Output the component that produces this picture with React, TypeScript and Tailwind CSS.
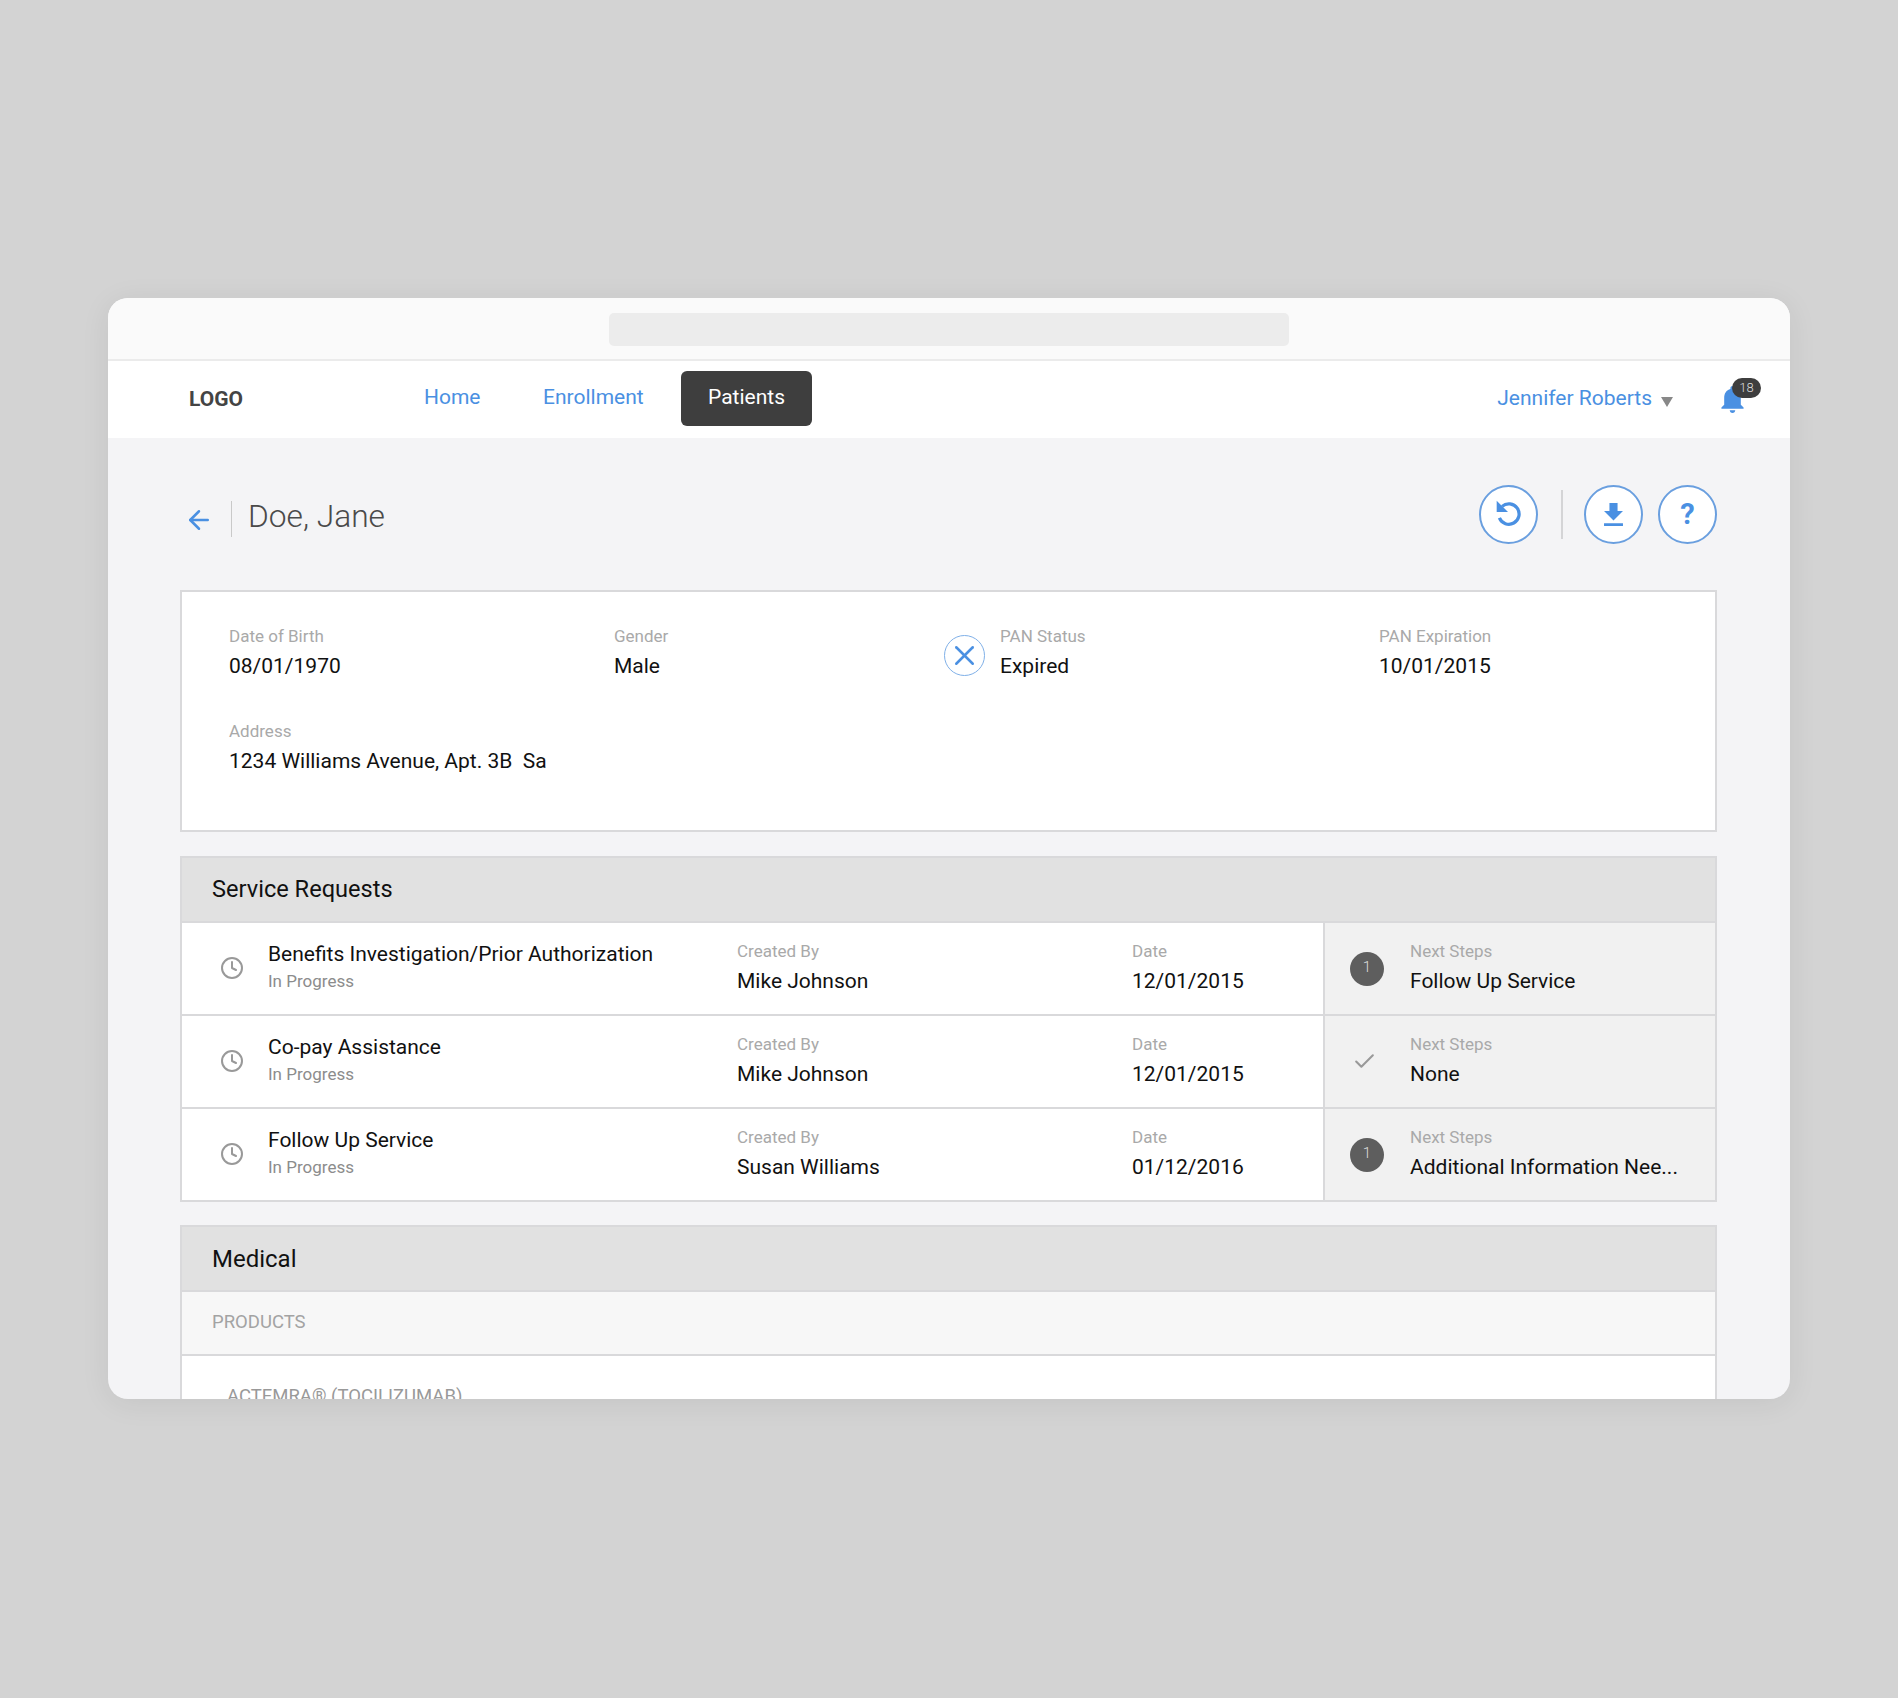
import { ArrowLeft, Check, Clock, X } from 'lucide-react';

const BLUE = 'text-[#4a90e2]';

const requests = [
  { title: 'Benefits Investigation/Prior Authorization', by: 'Mike Johnson', date: '12/01/2015', next: 'Follow Up Service', done: false },
  { title: 'Co-pay Assistance', by: 'Mike Johnson', date: '12/01/2015', next: 'None', done: true },
  { title: 'Follow Up Service', by: 'Susan Williams', date: '01/12/2016', next: 'Additional Information Nee...', done: false },
];

const Field = ({ label, value }: { label: string; value: string }) => (
  <div>
    <div className="text-[17px] leading-[20px] text-[#a9a9a9]">{label}</div>
    <div className="mt-[8px] text-[21px] leading-[24px] whitespace-pre text-[#111]">{value}</div>
  </div>
);

const RoundButton = ({ children }: { children: React.ReactNode }) => (
  <div className={`flex h-[59px] w-[59px] items-center justify-center rounded-full border-2 border-[#6a9fdf] bg-white ${BLUE}`}>
    {children}
  </div>
);

export default function App() {
  return (
    <div className="h-[1698px] overflow-hidden bg-[#d3d3d3] pt-[298px] pl-[108px] font-['Roboto',sans-serif]">
      <div className="h-[1101px] w-[1682px] overflow-hidden rounded-[20px] bg-[#f4f4f6] shadow-[0_4px_30px_rgba(0,0,0,0.07)]">
        {/* browser chrome */}
        <div className="flex h-[63px] items-start justify-center border-b-2 border-[#ebebeb] bg-[#fafafa] pt-[15px]">
          <div className="h-[33px] w-[680px] rounded-[5px] bg-[#ececec]" />
        </div>

        {/* nav */}
        <div className="flex h-[77px] items-center bg-white pl-[81px]">
          <div className="w-[235px] text-[21px] font-bold text-[#444]">LOGO</div>
          <div className={`-mt-[3px] w-[119px] text-[21px] ${BLUE}`}>Home</div>
          <div className={`-mt-[3px] w-[138px] text-[21px] ${BLUE}`}>Enrollment</div>
          <div className="-mt-[2px] flex h-[55px] w-[131px] items-center justify-center rounded-[6px] bg-[#3e3e3e] pb-[1px] text-[21px] text-white">Patients</div>
          <div className={`-mt-[1px] ml-auto text-[21px] ${BLUE}`}>Jennifer Roberts</div>
          <div className="mt-[4px] ml-[9px] h-0 w-0 border-x-[6.5px] border-t-[10px] border-x-transparent border-t-[#888]" />
          <div className="relative mr-[45px] ml-[48px] h-[28px] w-[24px]">
            <svg viewBox="4 2.5 16 19.5" className="h-[27px] w-[23px] fill-[#4a90e2]">
              <path d="M12 22c1.1 0 2-.9 2-2h-4c0 1.1.89 2 2 2zm6-6v-5c0-3.07-1.64-5.64-4.5-6.32V4c0-.83-.67-1.5-1.5-1.5s-1.5.67-1.5 1.5v.68C7.63 5.36 6 7.92 6 11v5l-2 2v1h16v-1l-2-2z" />
            </svg>
            <div className="absolute -top-[8px] left-[11px] flex h-[20px] w-[29px] items-center justify-center rounded-full bg-[#3e3e3e] text-[13px] font-light text-[#ddd]">18</div>
          </div>
        </div>

        <div className="pr-[73px] pl-[72px]">
          {/* title row */}
          <div className="flex h-[152px] items-center">
            <ArrowLeft className={`mt-[12px] ml-[4px] h-[30px] w-[30px] ${BLUE}`} strokeWidth={2} />
            <div className="mt-[9px] ml-[17px] h-[36px] w-px bg-[#c9c9c9]" />
            <div className="mt-[6px] ml-[16px] text-[31.7px] font-light text-[#4a4a4a]">Doe, Jane</div>
            <div className="ml-auto flex items-center">
              <RoundButton>
                <svg viewBox="0 0 26 26" className="mr-[2px] mb-[4px] h-[28px] w-[28px]">
                  <path d="M7.5 7.8A9.5 9.5 0 1 1 5 18.5" fill="none" stroke="#4a90e2" strokeWidth="3" />
                  <path d="M2.5 2.5V13h10.5z" fill="#4a90e2" />
                </svg>
              </RoundButton>
              <div className="mr-[21px] ml-[23px] h-[49px] w-[2px] bg-[#d4d4d6]" />
              <RoundButton>
                <svg viewBox="5 3 14 17" className="h-[23px] w-[19px] fill-[#4a90e2]">
                  <path d="M19 9h-4V3H9v6H5l7 7 7-7zM5 18v2h14v-2H5z" />
                </svg>
              </RoundButton>
              <div className="w-[15px]" />
              <RoundButton><span className="pt-[1px] text-[29px] font-bold">?</span></RoundButton>
            </div>
          </div>

          {/* patient card */}
          <div className="h-[242px] border-2 border-[#d9d9db] bg-white pt-[34px] pl-[47px]">
            <div className="flex">
              <div className="w-[385px]"><Field label="Date of Birth" value="08/01/1970" /></div>
              <div className="w-[330px]"><Field label="Gender" value="Male" /></div>
              <div className="flex w-[435px] items-center">
                <div className={`mt-[6px] flex h-[41px] w-[41px] items-center justify-center rounded-full border border-[#7fb0e8] ${BLUE}`}>
                  <X className="h-[33px] w-[33px]" strokeWidth={1.8} />
                </div>
                <div className="ml-[15px]"><Field label="PAN Status" value="Expired" /></div>
              </div>
              <Field label="PAN Expiration" value="10/01/2015" />
            </div>
            <div className="mt-[43px]"><Field label="Address" value="1234 Williams Avenue, Apt. 3B  Sa" /></div>
          </div>

          {/* service requests */}
          <div className="mt-[24px] border-2 border-[#d9d9db]">
            <div className="flex h-[63px] items-center bg-[#e1e1e1] pl-[30px] text-[23.6px] text-[#111]">Service Requests</div>
            {requests.map((r) => (
              <div key={r.title} className="flex h-[93px] border-t-2 border-[#d9d9db] bg-white">
                <div className="flex w-[555px] shrink-0 items-center pl-[38px]">
                  <Clock className="mb-[1px] h-[24px] w-[24px] text-[#999]" strokeWidth={2} />
                  <div className="mb-[5px] ml-[24px]">
                    <div className="text-[21px] leading-[26px] whitespace-nowrap text-[#111]">{r.title}</div>
                    <div className="mt-[3px] text-[17px] leading-[22px] text-[#8c8c8c]">In Progress</div>
                  </div>
                </div>
                <div className="flex w-[395px] shrink-0 items-center pb-[3px]"><Field label="Created By" value={r.by} /></div>
                <div className="flex w-[191px] shrink-0 items-center pb-[3px]"><Field label="Date" value={r.date} /></div>
                <div className="flex flex-1 items-center border-l-2 border-[#d9d9db] bg-[#f1f1f1] pl-[25px]">
                  <div className="flex h-[34px] w-[34px] items-center justify-center">
                    {r.done ? (
                      <Check className="-ml-[5px] h-[25px] w-[25px] text-[#999]" strokeWidth={2} />
                    ) : (
                      <div className="flex h-[34px] w-[34px] items-center justify-center rounded-full bg-[#5e5e5e] pb-[3px] text-[15px] font-light text-[#ddd]">1</div>
                    )}
                  </div>
                  <div className="mb-[3px] ml-[26px]"><Field label="Next Steps" value={r.next} /></div>
                </div>
              </div>
            ))}
          </div>

          {/* medical */}
          <div className="mt-[23px] border-2 border-[#d9d9db]">
            <div className="flex h-[63px] items-center bg-[#e1e1e1] pl-[30px] text-[24px] text-[#111]">Medical</div>
            <div className="flex h-[64px] items-center border-t-2 border-[#d9d9db] bg-[#f7f7f7] pl-[30px] text-[18.5px] text-[#a3a3a3]">PRODUCTS</div>
            <div className="h-[120px] border-t-2 border-[#d9d9db] bg-white pt-[27px] pl-[45px] text-[18.5px] text-[#999]">ACTEMRA® (TOCILIZUMAB)</div>
          </div>
        </div>
      </div>
    </div>
  );
}
